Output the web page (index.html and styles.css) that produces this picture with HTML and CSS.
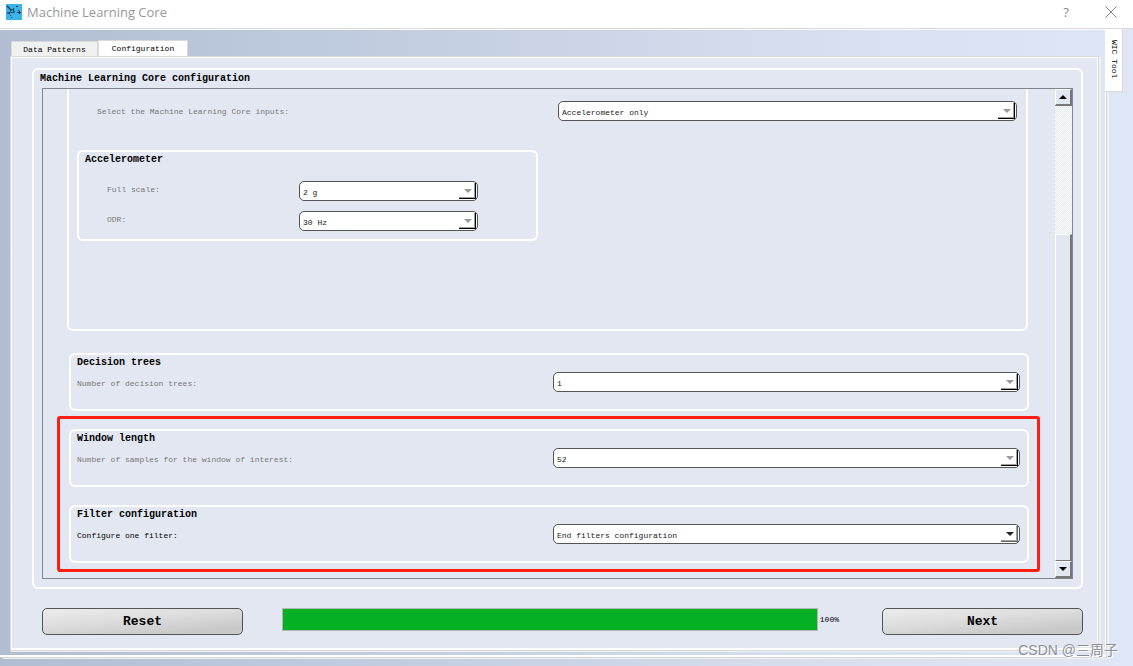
FILE: index.html
```html
<!DOCTYPE html>
<html lang="en">
<head>
<meta charset="utf-8">
<title>Machine Learning Core</title>
<link rel="stylesheet" href="styles.css">
</head>
<body>
<header class="titlebar">
  <svg class="app-icon" viewBox="0 0 16 16" aria-hidden="true">
    <path fill="#3db4e8" d="M0 0h16v16H0z"/>
    <path fill="none" stroke="#12304f" stroke-width="1.2" d="M1 2l4 4M1 9h2M4 8l-1 2M7 5.500l1-1M8 8h1M10 2.500h2M12 6.500h1M11 8.500h4M13.500 7v3M4 11.500h1M5 13.500h1"/>
    <circle cx="6.300" cy="7.200" r="1.600" fill="none" stroke="#12304f"/>
  </svg>
  <h1 class="window-title">Machine Learning Core</h1>
  <button class="title-button" aria-label="Help">?</button>
  <button class="title-button" aria-label="Close">
    <svg class="close-icon" viewBox="0 0 12 12" aria-hidden="true"><path d="M.5.5l11 11M11.500.5l-11 11" fill="none" stroke="#858585"/></svg>
  </button>
</header>
<div class="workspace">
  <div class="dock">
    <main class="tabs-area">
      <nav class="tabs" role="tablist">
        <button class="tab" role="tab">Data Patterns</button>
        <button class="tab tab-active" role="tab" aria-selected="true">Configuration</button>
      </nav>
      <div class="pane">
        <section class="group main-group">
          <h2 class="group-title main-title">Machine Learning Core configuration</h2>
          <div class="scroll-area">
            <div class="scroll-content">
              <section class="group inputs-group">
                <div class="row inputs-row">
                  <label class="label" for="inputs">Select the Machine Learning Core inputs:</label>
                  <span class="combo"><select id="inputs" disabled><option>Accelerometer only</option></select></span>
                </div>
                <section class="group accel-group">
                  <h3 class="group-title">Accelerometer</h3>
                  <div class="row accel-row">
                    <label class="label" for="scale">Full scale:</label>
                    <span class="combo"><select id="scale" disabled><option>2 g</option></select></span>
                  </div>
                  <div class="row accel-row">
                    <label class="label" for="odr">ODR:</label>
                    <span class="combo"><select id="odr" disabled><option>30 Hz</option></select></span>
                  </div>
                </section>
              </section>
              <div class="settings">
                <section class="group setting">
                  <h3 class="group-title">Decision trees</h3>
                  <div class="row">
                    <label class="label" for="trees">Number of decision trees:</label>
                    <span class="combo"><select id="trees" disabled><option>1</option></select></span>
                  </div>
                </section>
                <div class="highlighted">
                  <section class="group setting">
                    <h3 class="group-title">Window length</h3>
                    <div class="row">
                      <label class="label" for="samples">Number of samples for the window of interest:</label>
                      <span class="combo"><select id="samples" disabled><option>52</option></select></span>
                    </div>
                  </section>
                  <section class="group setting">
                    <h3 class="group-title">Filter configuration</h3>
                    <div class="row">
                      <label class="label label-active" for="filter">Configure one filter:</label>
                      <span class="combo combo-active"><select id="filter"><option>End filters configuration</option></select></span>
                    </div>
                  </section>
                </div>
              </div>
            </div>
            <div class="scrollbar">
              <button class="scroll-button" aria-label="Scroll up"><svg class="scroll-arrow" viewBox="0 0 8 4" aria-hidden="true"><path d="M0 4l4-4 4 4z"/></svg></button>
              <div class="scroll-track"></div>
              <div class="scroll-thumb"></div>
              <button class="scroll-button" aria-label="Scroll down"><svg class="scroll-arrow" viewBox="0 0 8 4" aria-hidden="true"><path d="M0 0l4 4 4-4z"/></svg></button>
            </div>
          </div>
        </section>
        <footer class="actions">
          <button class="action">Reset</button>
          <div class="progress-box">
            <progress class="progress" id="progress" max="100" value="100"></progress>
            <label class="progress-label" for="progress">100%</label>
          </div>
          <button class="action">Next</button>
        </footer>
      </div>
    </main>
  </div>
  <aside class="side"><button class="side-tab">WIC Tool</button></aside>
</div>
<div class="watermark">CSDN @三周子</div>
</body>
</html>
```
FILE: styles.css
```css
* { box-sizing: border-box; }

body {
  margin: 0;
  min-height: 100vh;
  display: flex;
  flex-direction: column;
  position: relative;
  font: 8px/12px "Liberation Mono", "Courier New", monospace;
  color: #000;
}

h1, h2, h3 { margin: 0; }

button {
  font: inherit;
  color: inherit;
  padding: 0;
  border: 0;
  background: none;
}

.titlebar {
  display: flex;
  align-items: center;
  height: 29px;
  padding: 0 7px 4px 6px;
  background: #fff;
  border-bottom: 1px solid #d9d9df;
}

.app-icon { width: 16px; height: 16px; }

.window-title {
  flex: 1;
  margin-left: 5px;
  font: 13px/20px "Open Sans", "Noto Sans", sans-serif;
  color: #999;
}

.title-button {
  width: 30px;
  margin-left: 15px;
  font: 13px/20px "Open Sans", "Noto Sans", sans-serif;
  color: #858585;
}

.close-icon { display: block; width: 12px; height: 12px; margin: 0 auto; }

.workspace {
  flex: 1;
  display: flex;
  padding-bottom: 9px;
  background: linear-gradient(90deg, #b1bdd2, #bfcbde 30%, #d9e0f0 75%, #dfe6f5);
}

.dock {
  flex: 1;
  display: flex;
  padding: 10px 4px 3px 10px;
  border-top: 1px solid #fff;
  border-right: 1px solid #fff;
  border-bottom: 2px solid #fff;
  box-shadow: 1px 1px #d6d6d6, 3px 2px #f0f0f0;
}

.tabs-area { flex: 1; display: flex; flex-direction: column; }

.tabs { display: flex; align-items: flex-end; padding-left: 1px; height: 16px; }

.tab {
  width: 87px;
  height: 15px;
  background: #f0f0f0;
  border: 1px solid #d9d9d9;
  border-bottom: 0;
  line-height: 16px;
}

.tab-active { position: relative; width: 90px; height: 16px; background: #fff; }

.pane {
  flex: 1;
  display: flex;
  flex-direction: column;
  margin: 0 2px 1px 0;
  padding: 11px 15px 15px 21px;
  background: #e3e7f2;
  border: 1px solid #d9d9d9;
  box-shadow: inset 0 0 0 1px #fff, inset 0 -2px #fff, 1px 1px #f0f0f0, 2px 1px #f0f0f0;
}

.group { border: 2px solid #fff; border-radius: 6px; }

.main-group { flex: 1; display: flex; flex-direction: column; padding: 0 8px 8px; }

.group-title { font-size: 10px; line-height: 16px; font-weight: bold; }

.main-title { margin: 0 -2px 1px; line-height: 17px; }

.scroll-area {
  flex: 1;
  display: flex;
  border: 1px solid #80848f;
}

.scroll-content { flex: 1; padding: 0 26px 0 24px; overflow: hidden; }

.inputs-group {
  height: 242px;
  margin-right: 1px;
  padding: 12px 9px 0 8px;
  border-top: 0;
  border-radius: 0 0 6px 6px;
}

.row {
  display: grid;
  grid-template-columns: 1fr 1fr;
  column-gap: 9px;
}

.inputs-row { column-gap: 2px; padding-left: 20px; }

.accel-group {
  width: calc(50% - 9px);
  height: 91px;
  margin-top: 27px;
  padding: 0 58px 0 6px;
}

.accel-row { column-gap: 13px; padding-left: 22px; margin-top: 10px; }

.group-title + .accel-row { margin-top: 13px; }

.label { line-height: 22px; color: #777; white-space: nowrap; }

.accel-row .label { line-height: 18px; }

.setting .label { line-height: 24px; }

.label-active { color: #000; }

.settings { margin: 22px 0 0 2px; }

.setting { height: 58px; padding: 0 7px 0 6px; }

.setting .row { margin-top: 1px; }

.highlighted {
  position: relative;
  display: grid;
  row-gap: 18px;
  margin-top: 18px;
}

.setting .label-active { color: #000; }

.highlighted::after {
  content: "";
  position: absolute;
  inset: -13px -11px -9px -12px;
  border: 3px solid #ff1f12;
  border-radius: 3px;
  pointer-events: none;
}

.combo { position: relative; display: block; height: 20px; }

.combo select {
  appearance: none;
  display: block;
  width: 100%;
  height: 20px;
  padding: 4px 20px 0 3px;
  border: 1px solid #555;
  border-radius: 5px;
  background: #fff;
  color: #222;
  opacity: 1;
  font: inherit;
}

.combo::before {
  content: "";
  position: absolute;
  right: 2px;
  top: 2px;
  bottom: 2px;
  width: 16px;
  border: solid #000;
  border-width: 0 1px 1px 0;
  box-shadow: inset -1px -1px #a0a0a0;
  pointer-events: none;
}

.combo::after {
  content: "";
  position: absolute;
  right: 6px;
  top: 8px;
  border: 4px solid transparent;
  border-top-color: #999;
  border-bottom: 0;
  pointer-events: none;
}

.combo-active::before { border-color: #666; }
.combo-active::after { border-top-color: #222; }

.scrollbar { display: flex; flex-direction: column; width: 17px; }

.scroll-button, .scroll-thumb {
  background: #e3e7f2;
  border: 1px solid #fff;
  border-right: 2px solid #777;
  border-bottom: 2px solid #777;
}

.scroll-button { height: 17px; }
.scroll-arrow { display: block; width: 8px; height: 4px; margin: 0 auto; }
.scroll-thumb { flex: 325; border-bottom-width: 1px; }

.scroll-track {
  flex: 128;
  background: repeating-conic-gradient(#fff 0 25%, #e3e7f2 0 50%) 0 0 / 2px 2px;
}

.actions {
  display: grid;
  grid-template-columns: 201px minmax(0, 1fr) 201px;
  column-gap: 39px;
  margin: 19px 0 0 10px;
}

.action {
  height: 27px;
  border: 1px solid #555;
  border-radius: 5px;
  background: linear-gradient(175deg, #ececec, #dedede 40%, #c8c8c8 85%);
  font-size: 13px;
  font-weight: bold;
}

.progress-box { display: flex; align-items: flex-start; gap: 2px; padding-right: 4px; }

.progress {
  appearance: none;
  flex: 1;
  min-width: 0;
  height: 23px;
  border: 1px solid #b5b5b5;
  background: #fff;
}

.progress::-webkit-progress-bar { background: #fff; }
.progress::-webkit-progress-value { background: #06b025; }
.progress-label { line-height: 24px; }

.side { width: 27px; }

.side-tab {
  position: relative;
  display: block;
  width: 18px;
  height: 63px;
  background: #fff;
  border: 1px solid #d9d9d9;
  border-width: 0 1px 1px 0;
  margin-left: -1px;
  padding-bottom: 2px;
  writing-mode: vertical-rl;
  text-align: center;
}

.watermark {
  position: absolute;
  right: 15px;
  bottom: 6px;
  font: 14px/20px "Liberation Sans", "Noto Sans CJK SC", sans-serif;
  color: #8b8f98;
  text-shadow: 1px 1px #fff;
}
```
